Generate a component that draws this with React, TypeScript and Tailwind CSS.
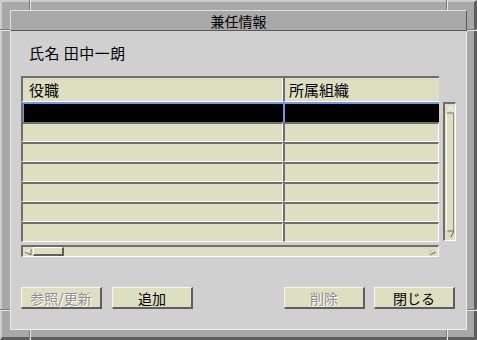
import React from "react";

function UpArrow() {
  return (
    <svg width="9" height="9" viewBox="0 0 9 9" className="block">
      <polygon points="4.5,1 8,8 1,8" fill="#dedec0" stroke="#f8f8f8" strokeWidth="1" />
      <polyline points="8,8 1,8" stroke="#5e5e5e" strokeWidth="1" fill="none" />
    </svg>
  );
}
function DownArrow() {
  return (
    <svg width="9" height="9" viewBox="0 0 9 9" className="block">
      <polygon points="1,1 8,1 4.5,8" fill="#dedec0" stroke="#5e5e5e" strokeWidth="1" />
      <polyline points="1,1 4.5,8" stroke="#f8f8f8" strokeWidth="1" fill="none" />
    </svg>
  );
}
function LeftArrow() {
  return (
    <svg width="8" height="8" viewBox="0 0 8 8" className="block">
      <polygon points="1,4 7,1 7,7" fill="#dedec0" stroke="#f8f8f8" strokeWidth="1" />
      <polyline points="7,1 7,7 1,4" stroke="#5e5e5e" strokeWidth="1" fill="none" />
    </svg>
  );
}
function RightArrow() {
  return (
    <svg width="8" height="8" viewBox="0 0 8 8" className="block">
      <polygon points="1,1 7,4 1,7" fill="#dedec0" stroke="#5e5e5e" strokeWidth="1" />
      <polyline points="1,7 1,1 7,4" stroke="#f8f8f8" strokeWidth="1" fill="none" />
    </svg>
  );
}

function Btn({ label, disabled }: { label: string; disabled?: boolean }) {
  return (
    <div
      className={
        "w-[81px] h-[22px] flex items-center justify-center bg-[#dedec0] border-t border-l border-t-[#f6f6f6] border-l-[#f6f6f6] border-b-2 border-r-2 border-b-[#5e5e5e] border-r-[#5e5e5e] text-[14px] leading-[18px] " +
        (disabled ? "text-[#8e8e8e] [text-shadow:1px_1px_0_#ffffff]" : "text-black")
      }
    >
      {label}
    </div>
  );
}

export default function App() {
  const rows = [1, 2, 3, 4, 5, 6];
  return (
    <div className="relative w-[477px] h-[340px] font-['Noto_Sans_CJK_JP','Noto_Sans_CJK_SC',sans-serif]">
      <div className="w-[477px] h-[340px] flex flex-col bg-[#a8a8a8] border-t-2 border-l-2 border-t-[#cdcdcd] border-l-[#cdcdcd] border-r-[3px] border-b-[3px] border-r-[#5e5e5e] border-b-[#5e5e5e] pt-[8px] pl-[8px] pr-[7px] pb-[7px]">
        {/* title bar */}
        <div className="h-[21px] shrink-0 flex items-center justify-center bg-[#a8a8a8] border-t border-l border-t-[#e2e2e2] border-l-[#e2e2e2] border-b border-r border-b-[#5a5a5a] border-r-[#5a5a5a] text-[14px] leading-[18px] text-black">
          兼任情報
        </div>
        {/* content */}
        <div className="flex-1 flex flex-col bg-[#d0d0d0] border-l border-r border-b border-l-[#e6e6e6] border-r-[#ececec] border-b-[#ececec]">
          <div className="mt-[12px] pl-[18px] text-[15px] leading-[20px] text-black tracking-[0.5px]">氏名 田中一朗</div>

          <div className="mt-[13px] ml-[10px] flex gap-[4px]">
            {/* table + hscroll */}
            <div className="w-[418px] flex flex-col">
              <div className="h-[26px] flex border-t-2 border-t-[#6e6e6e] text-[15px] leading-[20px] text-black">
                <div className="w-[262px] bg-[#dedec0] border-l-2 border-l-[#6e6e6e] border-r border-r-white border-b border-b-white pl-[6px] pt-[2px]">
                  役職
                </div>
                <div className="flex-1 bg-[#dedec0] border-l-2 border-l-[#6e6e6e] border-b border-b-white pl-[4px] pt-[2px]">
                  所属組織
                </div>
              </div>
              {/* selected row */}
              <div className="h-[20px] flex">
                <div className="w-[262px] bg-black border-l-2 border-l-[#6e6e6e] border-t-2 border-t-[#6b9be6] shadow-[inset_1px_0_0_#6b9be6]" />
                <div className="flex-1 bg-black border-l-2 border-l-[#6b9be6] border-t-2 border-t-[#6b9be6]" />
              </div>
              {rows.map((r) => (
                <div key={r} className="h-[20px] flex">
                  <div className="w-[262px] bg-[#dedec0] border-t-2 border-l-2 border-t-[#6e6e6e] border-l-[#6e6e6e] border-b border-r border-b-white border-r-white" />
                  <div className="flex-1 bg-[#dedec0] border-t-2 border-l-2 border-t-[#6e6e6e] border-l-[#6e6e6e] border-b border-r border-b-white border-r-white" />
                </div>
              ))}
              {/* horizontal scrollbar */}
              <div className="mt-[3px] h-[12px] flex items-center bg-[#dedec0] border-t-2 border-l-2 border-t-[#6e6e6e] border-l-[#6e6e6e] border-b border-r border-b-white border-r-white">
                <div className="ml-[1px]">
                  <LeftArrow />
                </div>
                <div className="ml-[1px] w-[31px] h-[9px] bg-[#dedec0] border-t border-l border-t-white border-l-white border-b-2 border-r-2 border-b-[#5e5e5e] border-r-[#5e5e5e]" />
                <div className="flex-1" />
                <div className="mr-[1px]">
                  <RightArrow />
                </div>
              </div>
            </div>
            {/* vertical scrollbar */}
            <div className="mt-[26px] w-[13px] h-[139px] flex flex-col items-center bg-[#dedec0] border-t-2 border-l-2 border-t-[#6e6e6e] border-l-[#6e6e6e] border-b border-r border-b-white border-r-white">
              <div className="mt-[1px]">
                <UpArrow />
              </div>
              <div className="flex-1 w-[8px] border-l border-l-white border-r border-r-[#8a8a8a]" />
              <div className="mb-[1px]">
                <DownArrow />
              </div>
            </div>
          </div>

          <div className="mt-[30px] ml-[10px] mr-[11px] flex">
            <Btn label="参照/更新" disabled />
            <div className="ml-[10px]">
              <Btn label="追加" />
            </div>
            <div className="flex-1" />
            <Btn label="削除" disabled />
            <div className="ml-[9px]">
              <Btn label="閉じる" />
            </div>
          </div>
        </div>
      </div>

      {/* frame resize notches */}
      <div className="absolute left-[29px] top-0 w-[1px] h-[10px] bg-[#7c7c7c]" />
      <div className="absolute left-[30px] top-0 w-[1px] h-[10px] bg-[#e6e6e6]" />
      <div className="absolute left-[446px] top-0 w-[1px] h-[10px] bg-[#7c7c7c]" />
      <div className="absolute left-[447px] top-0 w-[1px] h-[10px] bg-[#e6e6e6]" />
      <div className="absolute left-0 top-[29px] w-[10px] h-[1px] bg-[#7c7c7c]" />
      <div className="absolute left-0 top-[30px] w-[10px] h-[1px] bg-[#e6e6e6]" />
      <div className="absolute left-[467px] top-[29px] w-[10px] h-[1px] bg-[#7c7c7c]" />
      <div className="absolute left-[467px] top-[30px] w-[10px] h-[1px] bg-[#e6e6e6]" />
      <div className="absolute left-0 top-[309px] w-[10px] h-[1px] bg-[#7c7c7c]" />
      <div className="absolute left-0 top-[310px] w-[10px] h-[1px] bg-[#e6e6e6]" />
      <div className="absolute left-[467px] top-[309px] w-[10px] h-[1px] bg-[#7c7c7c]" />
      <div className="absolute left-[467px] top-[310px] w-[10px] h-[1px] bg-[#e6e6e6]" />
      <div className="absolute left-[29px] top-[330px] w-[1px] h-[10px] bg-[#7c7c7c]" />
      <div className="absolute left-[30px] top-[330px] w-[1px] h-[10px] bg-[#e6e6e6]" />
      <div className="absolute left-[446px] top-[330px] w-[1px] h-[10px] bg-[#7c7c7c]" />
      <div className="absolute left-[447px] top-[330px] w-[1px] h-[10px] bg-[#e6e6e6]" />
    </div>
  );
}
